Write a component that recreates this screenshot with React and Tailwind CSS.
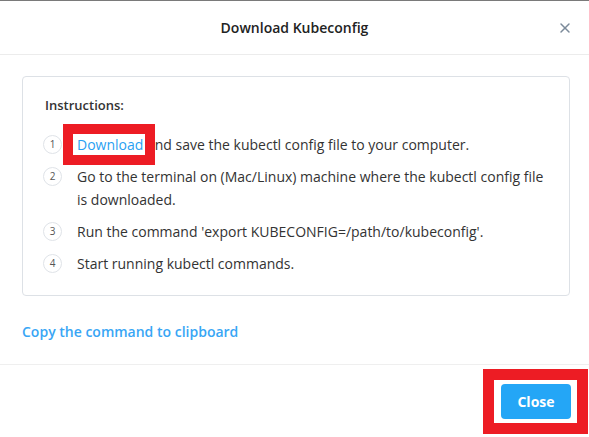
import { X } from 'lucide-react'

const steps = [
  'and save the kubectl config file to your computer.',
  'Go to the terminal on (Mac/Linux) machine where the kubectl config file is downloaded.',
  "Run the command 'export KUBECONFIG=/path/to/kubeconfig'.",
  'Start running kubectl commands.',
]

function StepNumber({ n }) {
  return (
    <span className="mt-[2px] flex h-[19px] w-[19px] shrink-0 items-center justify-center rounded-full border border-[#dfe3e8] text-[10px] text-[#555]">
      {n}
    </span>
  )
}

export default function App() {
  return (
    <div
      className="flex h-[437px] w-[589px] flex-col border-t border-[#7a7a7a] bg-white text-[#333]"
      style={{ fontFamily: '"Open Sans", "Liberation Sans", sans-serif' }}
    >
      {/* Header */}
      <div className="relative flex h-[54px] shrink-0 items-center justify-center border-b border-[#ececec]">
        <h2 className="text-[14px] font-semibold text-[#222]">Download Kubeconfig</h2>
        <button className="absolute right-[16px] top-[19px] text-[#7b8a9a]">
          <X className="h-[16px] w-[16px]" strokeWidth={2.2} />
        </button>
      </div>

      {/* Body */}
      <div className="flex-1 pl-[22px] pr-[19px] pt-[21px]">
        <div className="rounded-[4px] border border-[#dde1e6] pb-[20px] pl-[20px] pr-[18px] pt-[17px]">
          <p className="ml-[2px] text-[13px] font-semibold leading-[22px] text-[#333]">Instructions:</p>
          <ol className="mt-[17px] flex flex-col gap-[9px]">
            {steps.map((s, i) => (
              <li key={i} className="flex gap-[15px] text-[14px] leading-[23px]">
                <StepNumber n={i + 1} />
                <span className="relative">
                  {i === 0 && (
                    <>
                      <a className="text-[#2a9ff2]">Download</a>{' '}
                    </>
                  )}
                  {s}
                  {i === 0 && (
                    <span className="pointer-events-none absolute left-[-14px] top-[-9px] h-[41px] w-[92px] border-[10px] border-[#ed1c24]" />
                  )}
                </span>
              </li>
            ))}
          </ol>
        </div>
        <a className="mt-[25px] block text-[14px] font-semibold text-[#38a6f5]">
          Copy the command to clipboard
        </a>
      </div>

      {/* Footer */}
      <div className="flex h-[73px] shrink-0 items-start justify-end border-t border-[#efefef] pr-[18px] pt-[19px]">
        <div className="relative">
          <button className="h-[35px] w-[70px] rounded-[4px] bg-[#24a6f6] text-[14px] font-bold text-white">
            Close
          </button>
          <span className="pointer-events-none absolute left-[-18px] top-[-15px] h-[65px] w-[105px] border-[11px] border-[#ed1c24]" />
        </div>
      </div>
    </div>
  )
}
